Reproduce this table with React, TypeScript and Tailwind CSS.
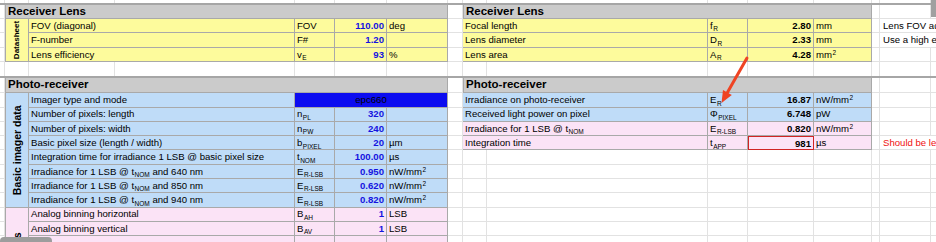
import React from 'react';

const YEL = 'bg-[#fdfb9c]';
const BLU = 'bg-[#bfdcf8]';
const PNK = 'bg-[#fbe3f6]';

function Sub({ children }: { children: React.ReactNode }) {
  return <span className="relative top-[2.5px] text-[6.5px] ml-[0.5px]">{children}</span>;
}

function Sup({ children }: { children: React.ReactNode }) {
  return <span className="relative -top-[3px] text-[6.5px] ml-[0.5px]">{children}</span>;
}

function Cell({ className = '', children }: { className?: string; children?: React.ReactNode }) {
  return (
    <div className={`flex items-center overflow-hidden whitespace-nowrap border-r border-b border-[#a9a9a9] px-[2px] ${className}`}>
      <span>{children}</span>
    </div>
  );
}

type Row = { r: string; name: React.ReactNode; sym?: React.ReactNode; val?: string; unit?: React.ReactNode; bg: string };

const NMM = <>nW/mm<Sup>2</Sup></>;

const lensLeft: Row[] = [
  { r: 'row-start-3', name: 'FOV (diagonal)', sym: 'FOV', val: '110.00', unit: 'deg', bg: YEL },
  { r: 'row-start-4', name: 'F-number', sym: 'F#', val: '1.20', unit: '', bg: YEL },
  { r: 'row-start-5', name: 'Lens efficiency', sym: <>v<Sub>E</Sub></>, val: '93', unit: '%', bg: YEL },
];

const lensRight: Row[] = [
  { r: 'row-start-3', name: 'Focal length', sym: <>f<Sub>R</Sub></>, val: '2.80', unit: 'mm', bg: YEL },
  { r: 'row-start-4', name: 'Lens diameter', sym: <>D<Sub>R</Sub></>, val: '2.33', unit: 'mm', bg: YEL },
  { r: 'row-start-5', name: 'Lens area', sym: <>A<Sub>R</Sub></>, val: '4.28', unit: <>mm<Sup>2</Sup></>, bg: YEL },
];

const imagerLeft: Row[] = [
  { r: 'row-start-9', name: 'Number of pixels: length', sym: <>n<Sub>PL</Sub></>, val: '320', bg: BLU },
  { r: 'row-start-10', name: 'Number of pixels: width', sym: <>n<Sub>PW</Sub></>, val: '240', bg: BLU },
  { r: 'row-start-11', name: 'Basic pixel size (length / width)', sym: <>b<Sub>PIXEL</Sub></>, val: '20', unit: 'µm', bg: BLU },
  { r: 'row-start-12', name: 'Integration time for irradiance 1 LSB @ basic pixel size', sym: <>t<Sub>NOM</Sub></>, val: '100.00', unit: 'µs', bg: BLU },
  { r: 'row-start-13', name: <>Irradiance for 1 LSB @ t<Sub>NOM</Sub> and 640 nm</>, sym: <>E<Sub>R-LSB</Sub></>, val: '0.950', unit: NMM, bg: BLU },
  { r: 'row-start-14', name: <>Irradiance for 1 LSB @ t<Sub>NOM</Sub> and 850 nm</>, sym: <>E<Sub>R-LSB</Sub></>, val: '0.620', unit: NMM, bg: BLU },
  { r: 'row-start-15', name: <>Irradiance for 1 LSB @ t<Sub>NOM</Sub> and 940 nm</>, sym: <>E<Sub>R-LSB</Sub></>, val: '0.820', unit: NMM, bg: BLU },
  { r: 'row-start-16', name: 'Analog binning horizontal', sym: <>B<Sub>AH</Sub></>, val: '1', unit: 'LSB', bg: PNK },
  { r: 'row-start-17', name: 'Analog binning vertical', sym: <>B<Sub>AV</Sub></>, val: '1', unit: 'LSB', bg: PNK },
  { r: 'row-start-18', name: '', bg: PNK },
  { r: 'row-start-19', name: '', bg: PNK },
  { r: 'row-start-20', name: '', bg: PNK },
  { r: 'row-start-21', name: '', bg: PNK },
  { r: 'row-start-22', name: '', bg: PNK },
];

const receiverRight: Row[] = [
  { r: 'row-start-8', name: 'Irradiance on photo-receiver', sym: <>E<Sub>R</Sub></>, val: '16.87', unit: NMM, bg: BLU },
  { r: 'row-start-9', name: 'Received light power on pixel', sym: <>Φ<Sub>PIXEL</Sub></>, val: '6.748', unit: 'pW', bg: BLU },
  { r: 'row-start-10', name: <>Irradiance for 1 LSB @ t<Sub>NOM</Sub></>, sym: <>E<Sub>R-LSB</Sub></>, val: '0.820', unit: NMM, bg: PNK },
  { r: 'row-start-11', name: 'Integration time', sym: <>t<Sub>APP</Sub></>, val: '981', unit: 'µs', bg: PNK },
];

function LeftRow({ row }: { row: Row }) {
  return (
    <>
      <Cell className={`${row.r} col-start-3 col-span-2 ${row.bg}`}>{row.name}</Cell>
      <Cell className={`${row.r} col-start-5 ${row.bg}`}>{row.sym}</Cell>
      <Cell className={`${row.r} col-start-6 justify-end font-bold text-[#1414e0] ${row.bg}`}>{row.val}</Cell>
      <Cell className={`${row.r} col-start-7 ${row.bg}`}>{row.unit}</Cell>
    </>
  );
}

function RightRow({ row, boxed }: { row: Row; boxed?: boolean }) {
  return (
    <>
      <Cell className={`${row.r} col-start-9 col-span-2 ${row.bg}`}>{row.name}</Cell>
      <Cell className={`${row.r} col-start-11 ${row.bg}`}>{row.sym}</Cell>
      <Cell className={`${row.r} col-start-12 justify-end font-bold ${row.bg} ${boxed ? 'border-t border-l !border-[#d02424]' : ''}`}>{row.val}</Cell>
      <Cell className={`${row.r} col-start-13 ${row.bg}`}>{row.unit}</Cell>
    </>
  );
}

// full-width empty sheet row, keeps the column grid lines
function BlankRow({ r }: { r: string }) {
  return (
    <div className={`${r} col-span-full grid grid-cols-subgrid border-b-2 border-[#a6a6a6]`}>
      {Array.from({ length: 16 }).map((_, i) => (
        <div key={i} className="border-r border-[#e2e2e2]" />
      ))}
    </div>
  );
}

function Note({ r, className = '', children }: { r: string; className?: string; children: React.ReactNode }) {
  return (
    <div className={`${r} col-start-15 col-span-2 flex items-center pl-[3px] whitespace-nowrap border-b border-[#e2e2e2] ${className}`}>
      {children}
    </div>
  );
}

export default function App() {
  return (
    <div className="relative w-[936px] h-[242px] overflow-hidden bg-white text-black text-[9.6px] leading-none font-['Liberation_Sans',Arial,sans-serif]">
      <div className="grid w-[1000px] grid-cols-[5px_24px_86px_180px_40px_52px_61px_15px_24px_221px_40px_66px_58px_8px_51px_69px] grid-rows-[5px_14px_14.4px_14.4px_14.4px_15.8px_15.3px_repeat(17,14.3px)] auto-rows-[14.3px]">
        <BlankRow r="row-start-1" />
        <BlankRow r="row-start-6" />

        {/* Receiver Lens */}
        <Cell className="row-start-2 col-start-2 col-span-6 border-l bg-[#cbcbcb] font-bold text-[11.5px]">Receiver Lens</Cell>
        <Cell className="row-start-3 row-span-3 col-start-2 border-l bg-[#fdfb9c] justify-center px-0">
          <span className="block -rotate-90 font-bold text-[8px]">Datasheet</span>
        </Cell>
        {lensLeft.map((row, i) => <LeftRow key={i} row={row} />)}

        <Cell className="row-start-2 col-start-9 col-span-5 border-l bg-[#cbcbcb] font-bold text-[11.5px]">Receiver Lens</Cell>
        {lensRight.map((row, i) => <RightRow key={i} row={row} />)}

        <Note r="row-start-3">Lens FOV adapted to the scene</Note>
        <Note r="row-start-4">Use a high efficiency lens</Note>

        {/* Photo-receiver */}
        <Cell className="row-start-7 col-start-2 col-span-6 border-l bg-[#cbcbcb] font-bold text-[11.5px]">Photo-receiver</Cell>
        <Cell className="row-start-8 row-span-8 col-start-2 border-l bg-[#bfdcf8] justify-center px-0">
          <span className="block -rotate-90 font-bold text-[10.5px]">Basic imager data</span>
        </Cell>
        <Cell className="row-start-16 row-span-9 col-start-2 border-l bg-[#fbe3f6] justify-center px-0">
          <span className="block -rotate-90 font-bold text-[10.5px]">Imager settings</span>
        </Cell>
        <Cell className="row-start-8 col-start-3 col-span-2 bg-[#bfdcf8]">Imager type and mode</Cell>
        <Cell className="row-start-8 col-start-5 col-span-3 bg-[#0c0cf0] justify-center">epc660</Cell>
        {imagerLeft.map((row, i) => <LeftRow key={i} row={row} />)}

        <Cell className="row-start-7 col-start-9 col-span-5 border-l bg-[#cbcbcb] font-bold text-[11.5px]">Photo-receiver</Cell>
        {receiverRight.map((row, i) => <RightRow key={i} row={row} boxed={i === 3} />)}

        <Note r="row-start-11" className="text-[#f01010]">Should be less than the max. integration time</Note>

        {/* remaining empty sheet cells */}
        {Array.from({ length: 400 }).map((_, i) => (
          <div key={`f${i}`} className="border-r border-b border-[#e2e2e2]" />
        ))}
      </div>

      {/* annotation arrow */}
      <svg className="absolute left-0 top-0 pointer-events-none" width="936" height="242">
        <line x1="747" y1="58" x2="727.4" y2="92.6" stroke="#ef4423" strokeWidth="3" strokeLinecap="round" />
        <polygon points="721.5,103 731.8,95.1 723,90.1" fill="#ef4423" />
      </svg>

      {/* window scrollbars */}
      <div className="absolute right-0 top-0 w-[5px] h-[17px] bg-[#a0a0a0]" />
      <div className="absolute left-0 top-[237px] w-[52px] h-[8px] rounded-full bg-[#9d9d9d]" />
    </div>
  );
}
